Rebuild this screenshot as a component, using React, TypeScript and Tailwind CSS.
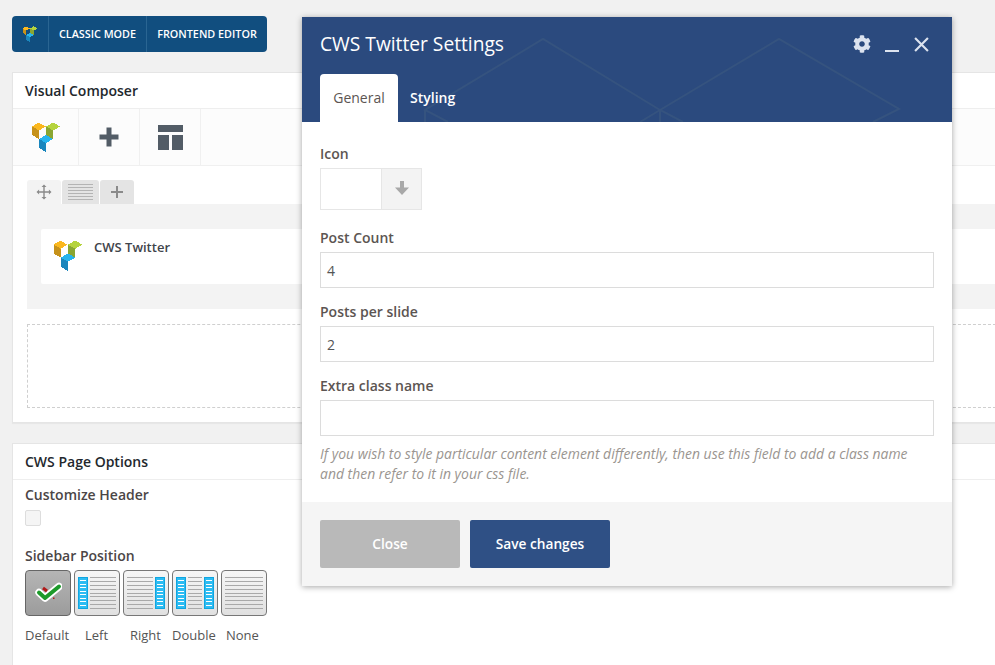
import React from 'react';
import { FaCog } from 'react-icons/fa';

const font = 'font-["Open_Sans",sans-serif]';

function VcLogo({ className }: { className?: string }) {
  return (
    <svg viewBox="0 0 28 30" className={className} shapeRendering="crispEdges">
      <polygon points="0,4.5 6.5,0.5 13.5,4.5 7,8.5" fill="#fbb81f" />
      <polygon points="0,4.5 7,8.5 7,17 0,13" fill="#c6921b" />
      <polygon points="14,4.5 21,0.5 28,4.5 21,8.5" fill="#b5d33d" />
      <polygon points="14,4.5 21,8.5 21,16.5 14,21" fill="#8aa632" />
      <polygon points="7,17 14,13 21,17 14,21" fill="#27b4ee" />
      <polygon points="7,17 14,21 14,30 7,26" fill="#1a86bd" />
    </svg>
  );
}

function TextLines({ className }: { className: string }) {
  return (
    <div className={`flex flex-col justify-between ${className}`}>
      {Array.from({ length: 9 }).map((_, i) => (
        <div key={i} className="h-px bg-[#a9a9a9]" />
      ))}
    </div>
  );
}

function SideBar() {
  return (
    <div className="flex h-[32px] w-[10px] shrink-0 flex-col justify-between border border-[#0fa5e0] bg-[#2dbcf2] px-px py-[2px]">
      {Array.from({ length: 8 }).map((_, i) => (
        <div key={i} className="h-px bg-white" />
      ))}
    </div>
  );
}

function SidebarOption({ type }: { type: string }) {
  if (type === 'default') {
    return (
      <div className="flex h-[46px] w-[46px] items-center justify-center rounded-[4px] border border-[#666] bg-gradient-to-b from-[#b5b5b5] to-[#9c9c9c]">
        <svg viewBox="0 0 28 24" className="h-[24px] w-[28px]">
          <path d="M5 11.500 L11 17 L25 5.500" stroke="#fff" strokeWidth="7.500" strokeLinecap="round" strokeLinejoin="round" fill="none" />
          <path d="M5 11.500 L11 17 L25 5.500" stroke="#1c9a2a" strokeWidth="4" strokeLinecap="round" strokeLinejoin="round" fill="none" />
          <path d="M9 7 L13 10" stroke="#b01818" strokeWidth="3" fill="none" />
          <rect x="19" y="16.500" width="1.500" height="1.500" fill="#b01818" />
        </svg>
      </div>
    );
  }
  return (
    <div className="flex h-[46px] w-[46px] items-center justify-center gap-[2px] rounded-[4px] border border-[#777] bg-gradient-to-b from-[#f6f6f6] to-[#e0e0e0] px-[3px]">
      {(type === 'left' || type === 'double') && <SideBar />}
      <TextLines className="h-[32px] flex-1" />
      {(type === 'right' || type === 'double') && <SideBar />}
    </div>
  );
}

function Field({ label, value }: { label: string; value: string }) {
  return (
    <div>
      <label className="block text-[14px] leading-[20px] font-semibold text-[#5c5552]">{label}</label>
      <div className="mt-[4px] flex h-[36px] items-center border border-[#dcdcdc] px-[6px] text-[14px] text-[#555]">{value}</div>
    </div>
  );
}

export default function App() {
  return (
    <div className={`relative h-[665px] w-[995px] overflow-hidden bg-[#f1f1f1] pt-[16px] pl-[12px] ${font}`}>
      {/* Mode switch */}
      <div className="flex h-[36px] w-[255px] items-center rounded-[4px] bg-[#114e7f] text-[10.800px] font-semibold text-white">
        <div className="flex h-full w-[37px] items-center justify-center border-r border-[#2a6592]">
          <VcLogo className="h-[16px] w-[16px]" />
        </div>
        <div className="flex h-full w-[98px] items-center justify-center border-r border-[#2a6592]">CLASSIC MODE</div>
        <div className="flex h-full flex-1 items-center justify-center">FRONTEND EDITOR</div>
      </div>

      {/* Visual Composer box */}
      <div className="mt-[20px] h-[351px] w-[1000px] border border-[#e5e5e5] bg-white shadow-[0_1px_1px_rgba(0,0,0,0.04)]">
        <div className="flex h-[36px] items-center border-b border-[#eee] pl-[12px] text-[14px] font-semibold text-[#23282d]">
          Visual Composer
        </div>
        <div className="flex h-[57px] border-b border-[#f0f0f0] bg-[#fcfcfc]">
          <div className="flex h-full w-[66px] items-center justify-center border-r border-[#f0f0f0]">
            <VcLogo className="h-[30px] w-[28px]" />
          </div>
          <div className="flex h-full w-[61px] items-center justify-center border-r border-[#f0f0f0]">
            <svg viewBox="0 0 20 20" className="h-[20px] w-[20px]" fill="#525c66">
              <path d="M7.500 0.500h5v7h7v5h-7v7h-5v-7h-7v-5h7z" />
            </svg>
          </div>
          <div className="flex h-full w-[61px] items-center justify-center border-r border-[#f0f0f0]">
            <svg viewBox="0 0 25 25" className="h-[25px] w-[25px]" fill="#525c66">
              <rect x="0" y="0" width="25" height="7" />
              <rect x="0" y="10" width="11" height="15" />
              <rect x="14" y="10" width="11" height="15" />
            </svg>
          </div>
        </div>

        <div className="pt-[14px] pl-[14px]">
          <div className="flex h-[24px] items-end gap-px">
            <div className="flex h-[24px] w-[34px] items-center justify-center rounded-t-[3px] bg-[#f3f3f3]">
              <svg viewBox="0 0 16 16" className="h-[16px] w-[16px]" fill="#8a8a8a">
                <path d="M8 0.500l2.500 2.600H8.700v4.200h4.200V5.500L15.500 8l-2.600 2.500V8.700H8.700v4.200h1.800L8 15.500l-2.500-2.600h1.800V8.700H3.100v1.800L0.500 8l2.600-2.500v1.800h4.200V3.100H5.500z" />
              </svg>
            </div>
            <div className="flex h-[24px] w-[37px] flex-col justify-center gap-[2px] rounded-t-[3px] bg-[#e4e4e4] px-[6px]">
              {Array.from({ length: 6 }).map((_, i) => (
                <div key={i} className="h-px bg-[#b4b4b4]" />
              ))}
            </div>
            <div className="flex h-[24px] w-[34px] items-center justify-center rounded-t-[3px] bg-[#e4e4e4]">
              <svg viewBox="0 0 12 12" className="h-[12px] w-[12px]" fill="#8a8a8a">
                <path d="M5 0h2v5h5v2H7v5H5V7H0V5h5z" />
              </svg>
            </div>
          </div>
          <div className="h-[105px] bg-[#f3f3f3] pt-[25px] pl-[14px]">
            <div className="flex h-[55px] gap-[11px] rounded-[2px] bg-white pt-[11px] pl-[12px]">
              <VcLogo className="h-[31px] w-[30px]" />
              <span className="text-[13px] leading-[15px] font-semibold text-[#3f444b]">CWS Twitter</span>
            </div>
          </div>
          <div className="mt-[15px] h-[84px] border border-dashed border-[#cfcfcf]" />
        </div>
      </div>

      {/* Page options box */}
      <div className="mt-[20px] h-[240px] w-[1000px] border border-[#e5e5e5] bg-white">
        <div className="flex h-[36px] items-center border-b border-[#eee] pl-[12px] text-[14px] font-semibold text-[#23282d]">
          CWS Page Options
        </div>
        <div className="pl-[12px]">
          <div className="pt-[5px] text-[14px] leading-[20px] font-semibold text-[#4b4646]">Customize Header</div>
          <div className="mt-[5px] h-[16px] w-[16px] rounded-[2px] border border-[#ddd] bg-[#f5f5f5]" />
          <div className="mt-[20px] text-[14px] leading-[20px] font-semibold text-[#4b4646]">Sidebar Position</div>
          <div className="mt-[4px] flex gap-[3px]">
            <SidebarOption type="default" />
            <SidebarOption type="left" />
            <SidebarOption type="right" />
            <SidebarOption type="double" />
            <SidebarOption type="none" />
          </div>
          <div className="mt-[10px] flex text-[13px] leading-[18px] text-[#555]">
            <span className="w-[60px]">Default</span>
            <span className="w-[45px]">Left</span>
            <span className="w-[42px]">Right</span>
            <span className="w-[54px]">Double</span>
            <span>None</span>
          </div>
        </div>
      </div>

      {/* Settings dialog */}
      <div className="absolute top-[17px] left-[302px] flex h-[569px] w-[650px] flex-col bg-white shadow-[0_1px_6px_rgba(0,0,0,0.35)]">
        <div className="relative h-[105px] shrink-0 overflow-hidden bg-[#2b4a7e]">
          <svg viewBox="0 0 650 105" className="absolute inset-0 h-full w-full" fill="none" stroke="#35537f" strokeWidth="2">
            <path d="M146 105 L123 93 L241 22 L358 93 L381 105" />
            <path d="M123 93 V105" />
            <path d="M338 105 L358 93 L477 22 L597 92 L571 105" />
            <path d="M358 93 V105" />
          </svg>
          <div className="relative flex items-center justify-between pt-[13px] pr-[23px] pl-[18px]">
            <h2 className="text-[19.200px] leading-[28px] font-normal text-white">CWS Twitter Settings</h2>
            <div className="flex items-center text-[#dce3ef]">
              <FaCog size={18} />
              <div className="mt-[14px] ml-[14px] h-[2px] w-[14px] bg-[#dce3ef]" />
              <svg viewBox="0 0 14 14" className="ml-[15px] h-[15px] w-[15px]" stroke="#dce3ef" strokeWidth="2" fill="none">
                <path d="M1 1l12 12M13 1L1 13" />
              </svg>
            </div>
          </div>
          <div className="absolute bottom-0 left-[18px] flex items-end">
            <div className="flex h-[48px] w-[78px] items-center justify-center rounded-t-[4px] bg-white pb-[2px] text-[14px] text-[#5c5552]">General</div>
            <div className="flex h-[48px] items-center pb-[2px] pl-[12px] text-[14px] font-semibold text-white">Styling</div>
          </div>
        </div>

        <div className="flex-1 px-[18px] pt-[22px]">
          <label className="block text-[14px] leading-[20px] font-semibold text-[#5c5552]">Icon</label>
          <div className="mt-[4px] mb-[18px] flex h-[42px] w-[102px] border border-[#e6e6e6]">
            <div className="w-[61px] border-r border-[#e6e6e6] bg-white" />
            <div className="flex flex-1 items-center justify-center bg-[#f3f3f3] pb-[3px]">
              <svg viewBox="0 0 14 14" className="h-[14px] w-[14px]" fill="#a8a8a8">
                <path d="M5 0h4v6.500h5L7 14 0 6.500h5z" />
              </svg>
            </div>
          </div>
          <div className="flex flex-col gap-[14px]">
            <Field label="Post Count" value="4" />
            <Field label="Posts per slide" value="2" />
            <Field label="Extra class name" value="" />
          </div>
          <p className="mt-[8px] text-[13.950px] leading-[20px] text-[#9a9590] italic">
            If you wish to style particular content element differently, then use this field to add a class name
            <br />
            and then refer to it in your css file.
          </p>
        </div>

        <div className="flex h-[84px] shrink-0 items-start gap-[10px] bg-[#f5f5f5] pt-[18px] pl-[18px]">
          <button className="h-[48px] w-[140px] rounded-[2px] bg-[#b9b9b9] text-[13.700px] font-semibold text-white">Close</button>
          <button className="h-[48px] w-[140px] rounded-[2px] bg-[#2f5085] text-[13.700px] font-semibold text-white">Save changes</button>
        </div>
      </div>
    </div>
  );
}
